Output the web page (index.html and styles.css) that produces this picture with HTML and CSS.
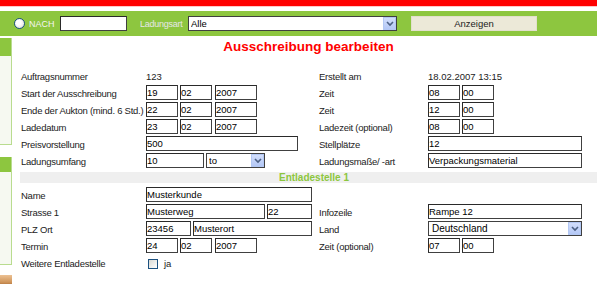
FILE: index.html
```html
<!DOCTYPE html>
<html lang="de">
<head>
  <meta charset="UTF-8" />
  <title>Ausschreibung bearbeiten</title>
  <link rel="stylesheet" href="styles.css">
</head>
<body>
  <div class="page">
    <div class="redbar"></div>

    <div class="searchbar">
      <input type="radio" class="radio" name="mode">
      <span class="nach">NACH</span>
      <input type="text" class="field search-field">
      <span class="ladungsart">Ladungsart</span>
      <span class="selectbox search-select">
        <select><option>Alle</option></select>
        <span class="arrow"><svg width="8" height="6" viewBox="0 0 8 6"><path d="M1 1 L4 4 L7 1" fill="none" stroke="#4d6185" stroke-width="1.6"/></svg></span>
      </span>
      <button class="show-btn">Anzeigen</button>
    </div>

    <div class="main">
      <aside class="sidebar">
        <div class="sidebox box-one"><div class="sidebox-head"></div></div>
        <div class="sidebox box-two"><div class="sidebox-head"></div></div>
        <div class="sidepic"></div>
      </aside>

      <section class="content">
        <h1 class="title">Ausschreibung bearbeiten</h1>

        <div class="form-grid">
          <div class="lbl">Auftragsnummer</div>
          <div class="val">123</div>
          <div class="lbl">Erstellt am</div>
          <div class="val">18.02.2007 13:15</div>

          <div class="lbl">Start der Ausschreibung</div>
          <div class="cell">
            <input class="field w-dd" value="19"><input class="field w-dd" value="02"><input class="field w-yyyy" value="2007">
          </div>
          <div class="lbl">Zeit</div>
          <div class="cell"><input class="field w-hh" value="08"><input class="field w-hh" value="00"></div>

          <div class="lbl">Ende der Aukton (mind. 6 Std.)</div>
          <div class="cell">
            <input class="field w-dd" value="22"><input class="field w-dd" value="02"><input class="field w-yyyy" value="2007">
          </div>
          <div class="lbl">Zeit</div>
          <div class="cell"><input class="field w-hh" value="12"><input class="field w-hh" value="00"></div>

          <div class="lbl">Ladedatum</div>
          <div class="cell">
            <input class="field w-dd" value="23"><input class="field w-dd" value="02"><input class="field w-yyyy" value="2007">
          </div>
          <div class="lbl">Ladezeit (optional)</div>
          <div class="cell"><input class="field w-hh" value="08"><input class="field w-hh" value="00"></div>

          <div class="lbl">Preisvorstellung</div>
          <div class="cell"><input class="field w-preis" value="500"></div>
          <div class="lbl">Stellplätze</div>
          <div class="cell"><input class="field w-wide" value="12"></div>

          <div class="lbl">Ladungsumfang</div>
          <div class="cell">
            <input class="field w-menge" value="10">
            <span class="selectbox w-unit">
              <select><option>to</option></select>
              <span class="arrow"><svg width="8" height="6" viewBox="0 0 8 6"><path d="M1 1 L4 4 L7 1" fill="none" stroke="#4d6185" stroke-width="1.6"/></svg></span>
            </span>
          </div>
          <div class="lbl">Ladungsmaße/ -art</div>
          <div class="cell"><input class="field w-wide" value="Verpackungsmaterial"></div>

          <div class="section-bar">Entladestelle 1</div>

          <div class="lbl">Name</div>
          <div class="cell"><input class="field w-name" value="Musterkunde"></div>
          <div class="lbl"></div>
          <div class="val"></div>

          <div class="lbl">Strasse 1</div>
          <div class="cell"><input class="field w-street" value="Musterweg"><input class="field w-nr" value="22"></div>
          <div class="lbl">Infozeile</div>
          <div class="cell"><input class="field w-wide" value="Rampe 12"></div>

          <div class="lbl">PLZ Ort</div>
          <div class="cell"><input class="field w-nr" value="23456"><input class="field w-street" value="Musterort"></div>
          <div class="lbl">Land</div>
          <div class="cell">
            <span class="selectbox w-wide land">
              <select><option>Deutschland</option></select>
              <span class="arrow"><svg width="8" height="6" viewBox="0 0 8 6"><path d="M1 1 L4 4 L7 1" fill="none" stroke="#4d6185" stroke-width="1.6"/></svg></span>
            </span>
          </div>

          <div class="lbl">Termin</div>
          <div class="cell">
            <input class="field w-dd" value="24"><input class="field w-dd" value="02"><input class="field w-yyyy" value="2007">
          </div>
          <div class="lbl">Zeit (optional)</div>
          <div class="cell"><input class="field w-hh" value="07"><input class="field w-hh" value="00"></div>

          <div class="lbl">Weitere Entladestelle</div>
          <div class="cell check-cell"><input type="checkbox" class="check"><span class="ja">ja</span></div>
          <div class="lbl"></div>
          <div class="val"></div>
        </div>
      </section>
    </div>
  </div>
</body>
</html>
```

FILE: styles.css
```css
:root {
  --red: #ff0000;
  --green: #8dc63f;
  --green-light: #b9dc8f;
  --border: #404040;
  --xp-blue: #1c5180;
}

body {
  margin: 0;
  background: #fff;
  font-family: "Liberation Sans", Arial, sans-serif;
  color: #111;
}

.page {
  width: 597px;
}

/* top bars */
.redbar {
  height: 6px;
  background: var(--red);
  border-bottom: 1px solid #ffc8c8;
  margin-bottom: 4px;
}

.searchbar {
  height: 25px;
  background: var(--green);
  display: flex;
  align-items: center;
  padding-left: 14px;
  font-size: 9px;
}

.radio {
  appearance: none;
  margin: 0;
  width: 11px;
  height: 11px;
  border-radius: 50%;
  border: 1px solid var(--xp-blue);
  background: radial-gradient(circle at 40% 40%, #ffffff 30%, #d6d6d0);
  box-sizing: border-box;
}

.nach {
  color: #f4f4f4;
  margin-left: 4px;
  width: 31px;
}

.ladungsart {
  color: #e6e6e6;
  margin-left: 13px;
  width: 48px;
  letter-spacing: -0.25px;
  white-space: nowrap;
}

.field {
  box-sizing: border-box;
  height: 15px;
  margin: 0;
  padding: 0 1px 0 0;
  border: 1px solid var(--border);
  border-top-color: #2a2a2a;
  border-left-color: #2a2a2a;
  background: #fff;
  font-family: "Liberation Sans", Arial, sans-serif;
  font-size: 9.5px;
  color: #000;
  outline: none;
}

.search-field {
  width: 67px;
}

.selectbox {
  position: relative;
  display: inline-block;
  height: 15px;
}

.selectbox select {
  appearance: none;
  box-sizing: border-box;
  width: 100%;
  height: 15px;
  margin: 0;
  padding: 0 0 0 2px;
  border: 1px solid var(--border);
  background: #fff;
  font-family: "Liberation Sans", Arial, sans-serif;
  font-size: 9.5px;
  color: #000;
  outline: none;
}

.selectbox .arrow {
  position: absolute;
  top: 1px;
  right: 1px;
  width: 13px;
  height: 13px;
  box-sizing: border-box;
  border: 1px solid #b3c8f4;
  background: linear-gradient(#d2defc, #b4c8f6);
  display: flex;
  align-items: center;
  justify-content: center;
}

.search-select {
  width: 209px;
}

.show-btn {
  margin-left: 14px;
  width: 126px;
  height: 15px;
  padding: 0;
  border: 1px solid #e2dfcd;
  background: #ece9d8;
  font-family: "Liberation Sans", Arial, sans-serif;
  font-size: 9.5px;
  color: #222;
}

/* main area */
.main {
  display: flex;
}

.sidebar {
  width: 12px;
  flex: none;
  display: flex;
  flex-direction: column;
}

.sidebox {
  box-sizing: border-box;
  width: 12px;
  background: #f6f9f1;
  border-right: 1px solid var(--green-light);
  border-bottom: 1px solid var(--green-light);
}

.box-one {
  margin-top: 2px;
  height: 107px;
}

.box-one .sidebox-head {
  height: 18px;
  background: var(--green);
}

.box-two {
  margin-top: 12px;
  height: 108px;
}

.box-two .sidebox-head {
  height: 15px;
  background: var(--green);
}

.sidepic {
  margin-top: 10px;
  width: 12px;
  height: 12px;
  background: linear-gradient(#ecc193, #cf955a 60%, #9c5a25);
}

.content {
  margin-left: 8px;
  width: 577px;
}

.title {
  margin: 0 0 13px;
  padding-top: 3px;
  line-height: 16px;
  font-size: 13.5px;
  font-weight: bold;
  color: var(--red);
  text-align: center;
}

/* form */
.form-grid {
  display: grid;
  grid-template-columns: 126px 172px 110px 169px;
  grid-auto-rows: 17px;
  font-size: 9.5px;
}

.lbl {
  padding-left: 1px;
  line-height: 17px;
  color: #222;
  white-space: nowrap;
  letter-spacing: -0.25px;
}

.val {
  line-height: 17px;
  color: #222;
}

.cell {
  display: flex;
  align-items: flex-start;
  gap: 2px;
}

.w-dd { width: 32px; }
.w-yyyy { width: 42px; margin-left: 1px; }
.w-hh { width: 32px; }
.w-preis { width: 152px; }
.w-wide { width: 154px; }
.w-name { width: 166px; }
.w-street { width: 119px; }
.w-nr { width: 45px; }
.w-menge { width: 58px; }
.w-unit { width: 59px; }

.land select {
  padding-left: 3px;
  font-size: 10px;
}

.section-bar {
  grid-column: 1 / -1;
  height: 11px;
  margin: 2px 0;
  background: #efefef;
  line-height: 11px;
  font-size: 10px;
  font-weight: bold;
  color: #8cc63e;
  text-align: center;
  padding-left: 11px;
}

.check-cell {
  align-items: center;
  height: 17px;
  padding-left: 2px;
  gap: 6px;
}

.check {
  appearance: none;
  margin: 0;
  width: 10px;
  height: 10px;
  box-sizing: border-box;
  border: 1px solid var(--xp-blue);
  background: linear-gradient(135deg, #d9d9d3, #ffffff);
}

.ja {
  color: #222;
}
```
